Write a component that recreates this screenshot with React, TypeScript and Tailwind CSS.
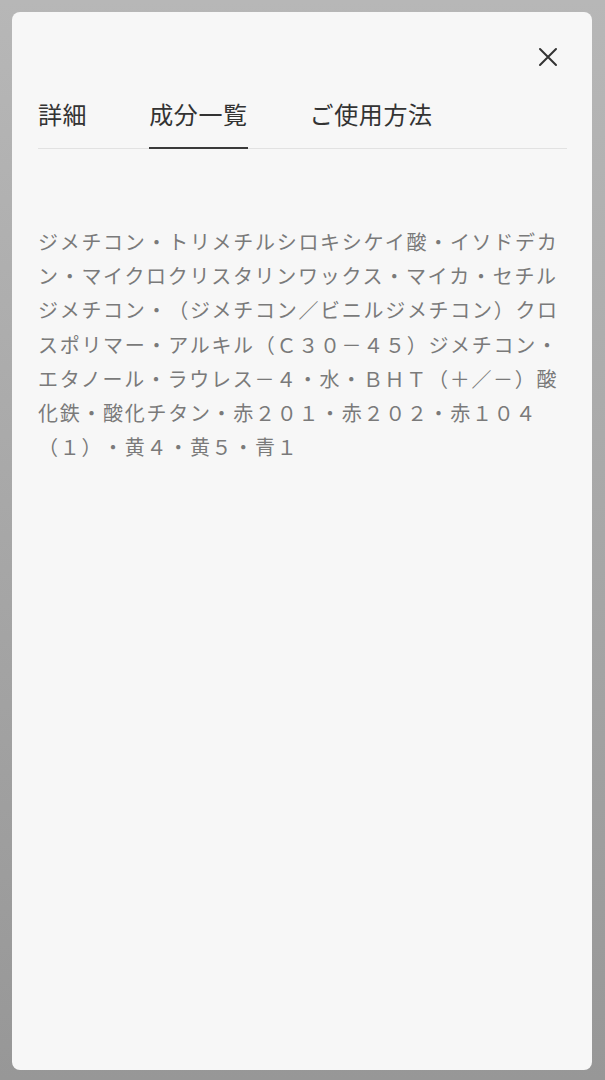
const tabs = ["詳細", "成分一覧", "ご使用方法"];

const ingredients =
  "ジメチコン・トリメチルシロキシケイ酸・イソドデカン・マイクロクリスタリンワックス・マイカ・セチルジメチコン・（ジメチコン／ビニルジメチコン）クロスポリマー・アルキル（Ｃ３０－４５）ジメチコン・エタノール・ラウレス－４・水・ＢＨＴ（＋／－）酸化鉄・酸化チタン・赤２０１・赤２０２・赤１０４（１）・黄４・黄５・青１";

export default function App() {
  const active = 1;
  return (
    <div
      className="w-[605px] h-[1080px] bg-gradient-to-b from-[#b7b7b7] to-[#979797] pt-[12px] pl-[12px] pr-[13px] pb-[10px]"
      style={{ fontFamily: '"Noto Sans CJK JP", "Noto Sans", sans-serif' }}
    >
      <div className="h-full w-full rounded-[8px] bg-[#f7f7f7] pl-[26px] pr-[25px] flex flex-col">
        <div className="flex justify-end pt-[34px] pr-[8px]">
          <button className="w-[22px] h-[22px] flex items-center justify-center text-[#333]">
            <svg width="20" height="20" viewBox="0 0 20 20" fill="none" stroke="currentColor" strokeWidth="2" strokeLinecap="round">
              <path d="M2 2L18 18M18 2L2 18" />
            </svg>
          </button>
        </div>

        <div className="mt-[28px] flex gap-[62px] border-b border-[#e2e2e2]">
          {tabs.map((t, i) => (
            <div
              key={t}
              className={`pb-[15px] text-[24px] leading-[36px] tracking-[0.6px] text-[#333] border-b-2 -mb-px ${
                i === active ? "border-[#3a3a3a]" : "border-transparent"
              }`}
            >
              {t}
            </div>
          ))}
        </div>

        <p className="mt-[76px] text-[20px] leading-[34.2px] tracking-[1.7px] text-[#7a7a7a] [text-spacing-trim:space-all]">
          {ingredients}
        </p>
      </div>
    </div>
  );
}
